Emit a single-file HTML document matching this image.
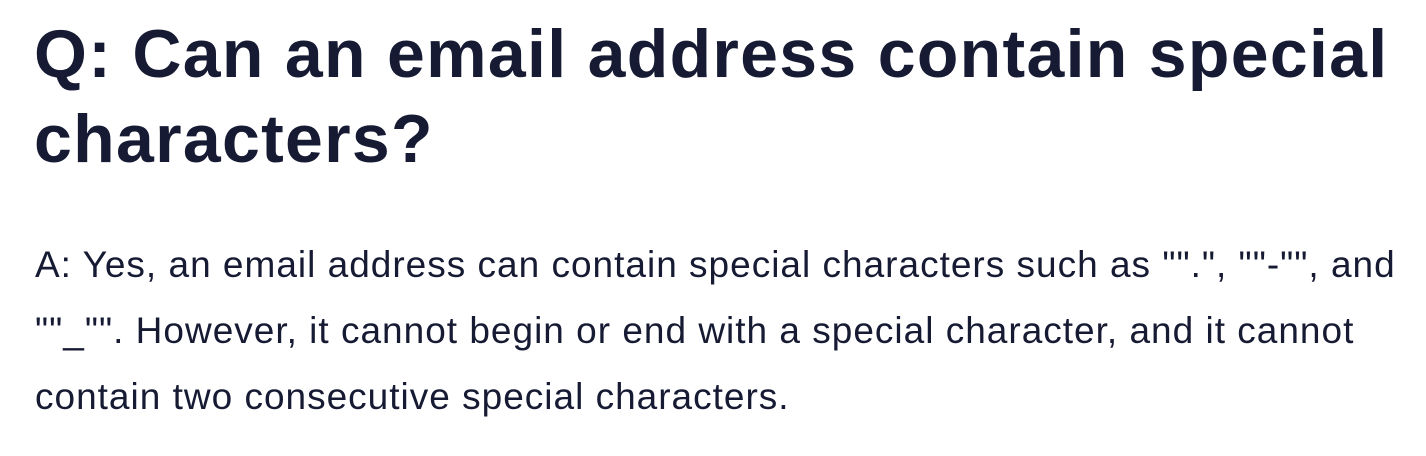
<!DOCTYPE html>
<html><head><meta charset="utf-8"><style>
html,body{margin:0;padding:0;background:#fff;width:1426px;height:456px;overflow:hidden}
body{color:#161a33;font-family:"Liberation Sans",sans-serif}
h1{position:absolute;left:34px;top:12px;margin:0;font-size:68px;font-weight:bold;line-height:85px;letter-spacing:1.3px;white-space:nowrap}
p{position:absolute;left:35px;top:232px;margin:0;font-size:37px;line-height:66px;white-space:nowrap;letter-spacing:1px}
</style></head><body>
<h1>Q: Can an email address contain special<br>characters?</h1>
<p>A: Yes, an email address can contain special characters such as "".", ""-"", and<br>""_"". However, it cannot begin or end with a special character, and it cannot<br>contain two consecutive special characters.</p>
</body></html>
